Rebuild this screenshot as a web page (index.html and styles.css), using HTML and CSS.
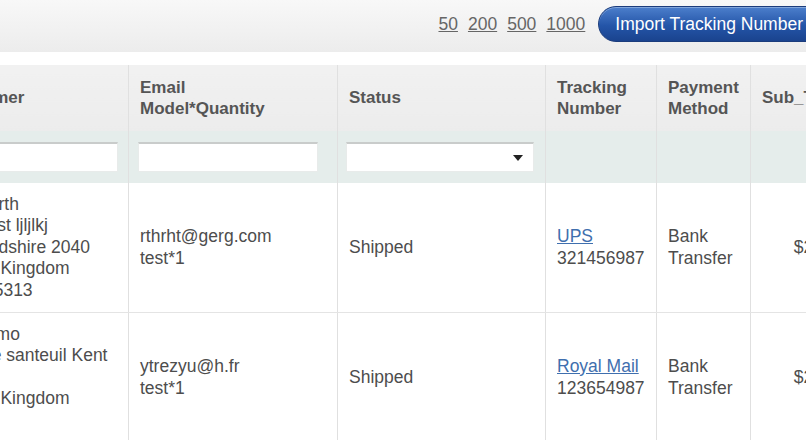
FILE: index.html
```html
<!DOCTYPE html>
<html lang="en">
<head>
    <meta charset="UTF-8">
    <title>Orders</title>
    <link rel="stylesheet" href="styles.css">
</head>
<body>
    <div class="toolbar">
        <div class="page-size">
            <a href="#">50</a>
            <a href="#">200</a>
            <a href="#">500</a>
            <a href="#">1000</a>
        </div>
        <button class="btn-import">Import Tracking Number</button>
    </div>

    <table class="orders">
        <colgroup>
            <col class="c-customer">
            <col class="c-email">
            <col class="c-status">
            <col class="c-tracking">
            <col class="c-payment">
            <col class="c-total">
        </colgroup>
        <thead>
            <tr class="head">
                <th>Customer</th>
                <th>Email<br>Model*Quantity</th>
                <th>Status</th>
                <th>Tracking<br>Number</th>
                <th>Payment<br>Method</th>
                <th>Sub_Total</th>
            </tr>
            <tr class="filters">
                <td><input type="text" class="f-customer"></td>
                <td><input type="text" class="f-email"></td>
                <td>
                    <div class="select">
                        <span class="arrow"></span>
                    </div>
                </td>
                <td></td>
                <td></td>
                <td></td>
            </tr>
        </thead>
        <tbody>
            <tr>
                <td>Kenworth<br>123 Test ljljlkj<br>Hertfordshire 2040<br>United Kingdom<br>012345313</td>
                <td>rthrht@gerg.com<br>test*1</td>
                <td>Shipped</td>
                <td><a href="#">UPS</a><br>321456987</td>
                <td>Bank<br>Transfer</td>
                <td class="total">$25.00</td>
            </tr>
            <tr>
                <td>Guillermo<br>12 Rue santeuil Kent<br>ME1<br>United Kingdom<br>&nbsp;</td>
                <td>ytrezyu@h.fr<br>test*1</td>
                <td>Shipped</td>
                <td><a href="#">Royal Mail</a><br>123654987</td>
                <td>Bank<br>Transfer</td>
                <td class="total">$25.00</td>
            </tr>
        </tbody>
    </table>
</body>
</html>
```

FILE: styles.css
```css
body {
    margin: 0;
    overflow: hidden;
    font-family: "Liberation Sans", Arial, sans-serif;
    font-size: 17.5px;
    color: #4d4d4d;
    background-color: #fff;
}
.toolbar {
    display: flex;
    justify-content: flex-end;
    align-items: flex-start;
    gap: 13px;
    height: 52px;
    padding-top: 6px;
    box-sizing: border-box;
    margin-right: -31px;
    background: linear-gradient(#f8f8f8, #ececec);
}
.page-size {
    display: flex;
    gap: 10px;
    padding-top: 8px;
}
.page-size a {
    color: #666;
    text-decoration: underline;
}
.btn-import {
    height: 36px;
    padding: 0 33px 0 16px;
    border: 1px solid #1b3c7c;
    border-radius: 18px;
    background: linear-gradient(#4c7fcc, #2455a8 55%, #1a438e);
    color: #fff;
    font-family: inherit;
    font-size: 17.5px;
    box-shadow: inset 0 1px 0 rgba(255,255,255,0.3);
}
.orders {
    margin-top: 13px;
    margin-left: -67px;
    border-collapse: collapse;
    table-layout: fixed;
    width: 957px;
}
.c-customer { width: 195px; }
.c-email { width: 209px; }
.c-status { width: 208px; }
.c-tracking { width: 111px; }
.c-payment { width: 94px; }
.c-total { width: 140px; }
th, td {
    border-left: 1px solid #e0e0e0;
    border-right: 1px solid #e0e0e0;
    padding: 0 11px;
    text-align: left;
    line-height: 21.5px;
    vertical-align: middle;
}
.head th {
    height: 66px;
    font-size: 17px;
    color: #555;
    background: linear-gradient(#f1f1f1, #ececec);
}
.filters td {
    height: 52px;
    background-color: #e5edeb;
    padding: 0 9px;
}
.filters input, .select {
    display: block;
    height: 30px;
    box-sizing: border-box;
    border: 1px solid #e8ebea;
    border-top: 2px solid #c9cccb;
    background-color: #fff;
    padding: 0;
}
.f-customer { width: 175px; }
.f-email { width: 180px; }
.select {
    position: relative;
    width: 188px;
    margin-left: -1px;
}
.arrow {
    position: absolute;
    right: 10px;
    top: 11px;
    border-left: 5px solid transparent;
    border-right: 5px solid transparent;
    border-top: 6px solid #222;
}
tbody td {
    height: 129px;
    border-bottom: 1px solid #e4e4e4;
}
tbody td a {
    color: #3f6fae;
}
.total {
    text-align: center;
}
```
